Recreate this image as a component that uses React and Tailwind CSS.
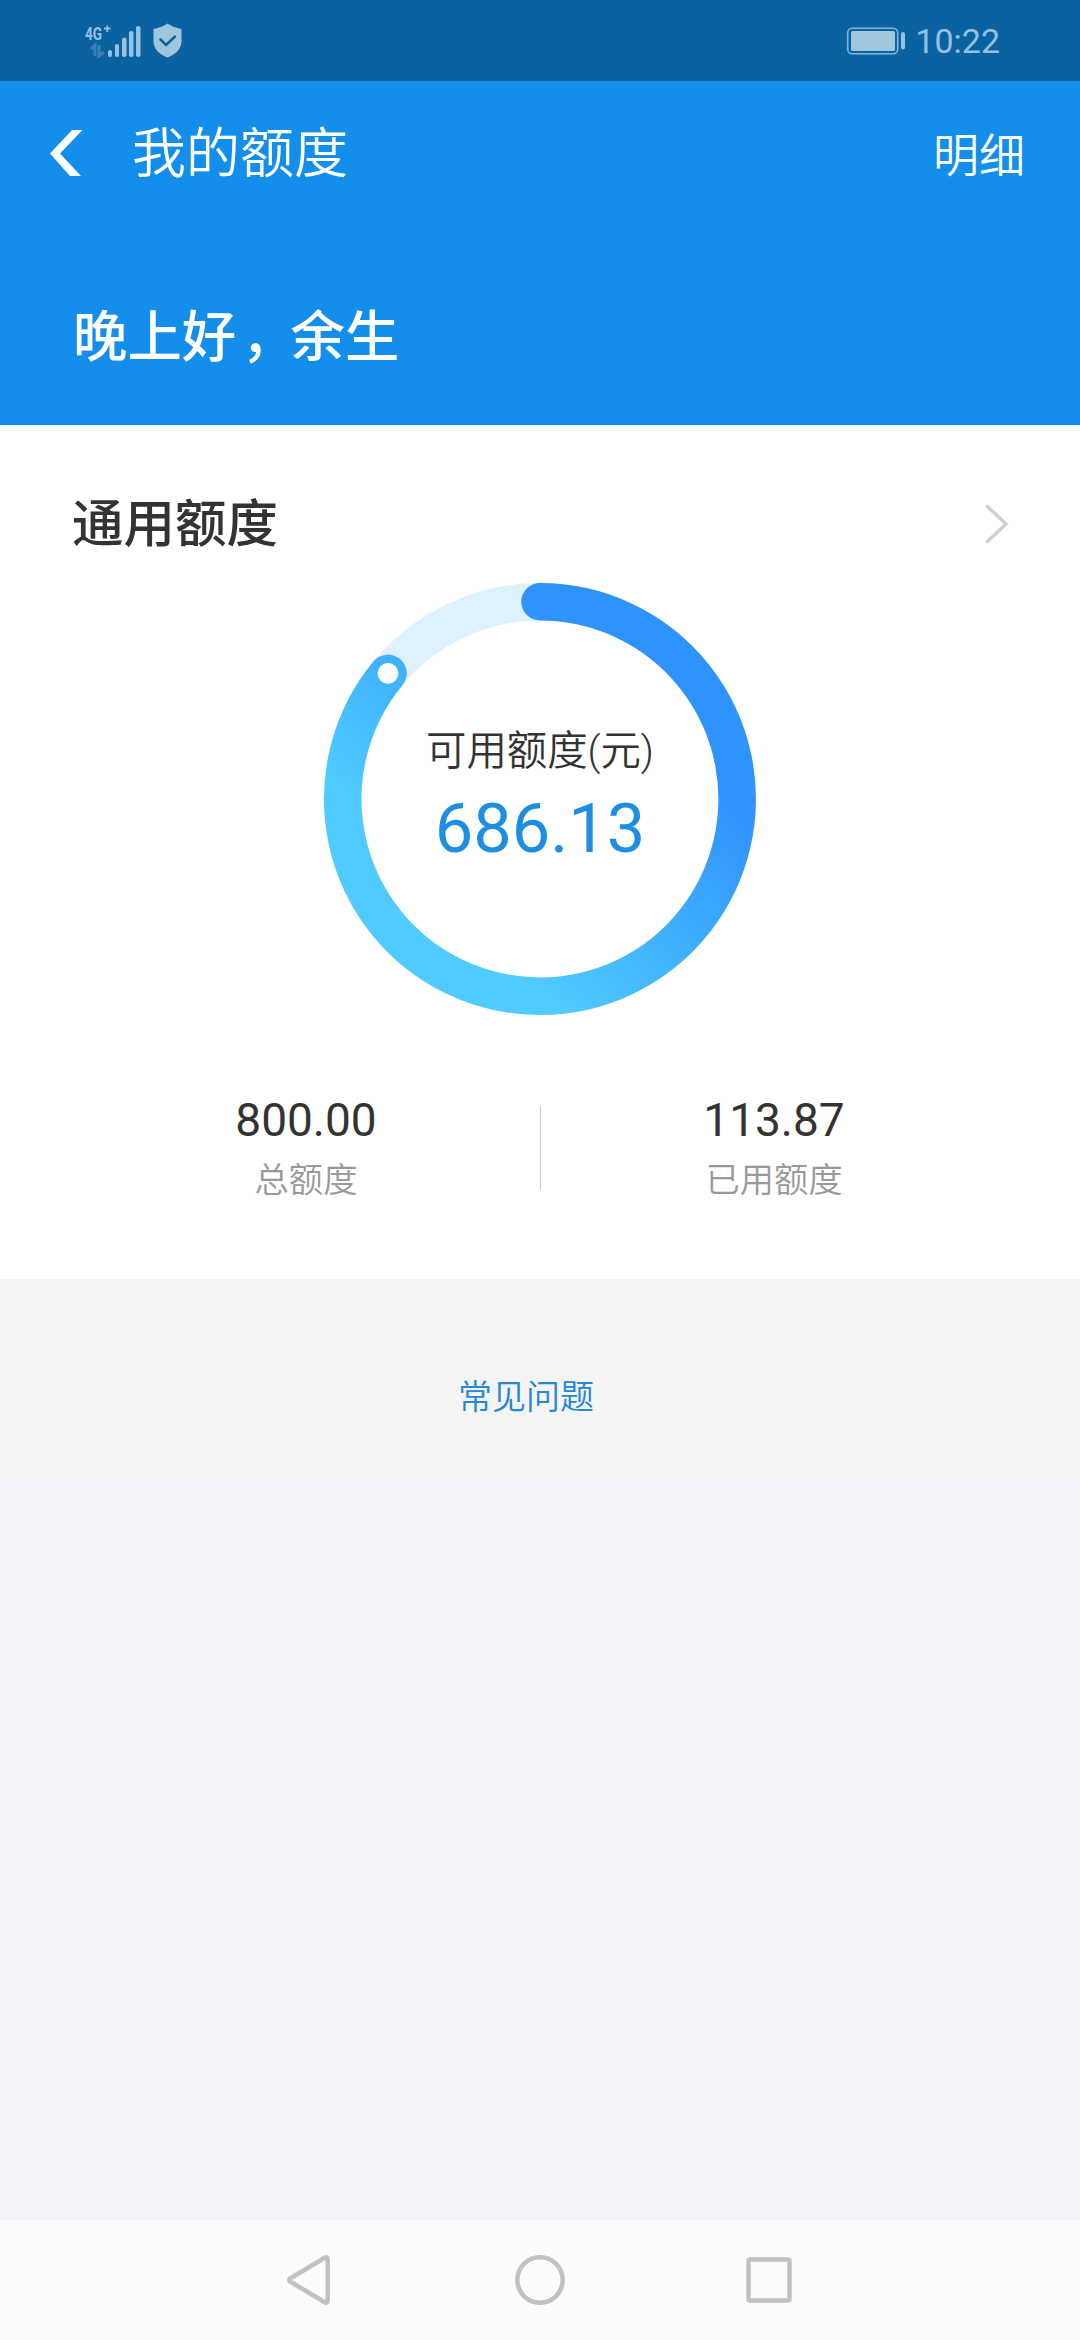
import React from "react";

const StatusBar = () => (
  <div className="h-[81px] bg-[#0b62a1] flex items-center justify-between pl-[84px] pr-[80px]">
    <div className="flex items-center gap-[11px]">
      {/* Mobile signal */}
      <svg width="58" height="36" viewBox="0 0 58 36" fill="#94c1e2">
        <text
          x="1"
          y="17"
          fontSize="19"
          fontWeight="700"
          fontFamily="Roboto, sans-serif"
          textLength="17"
          lengthAdjust="spacingAndGlyphs"
        >
          4G
        </text>
        <path d="M20 5.5h6.5M23.3 2.5v6.5" stroke="#94c1e2" strokeWidth="1.8" />
        <path
          d="M7 26l4-4v11M15 22v11l5-4"
          fill="none"
          stroke="#3a80b6"
          strokeWidth="3"
        />
        <rect x="24" y="27" width="4" height="7" rx="2" />
        <rect x="31" y="21" width="4" height="13" rx="2" />
        <rect x="38" y="14.500" width="4.500" height="19.500" rx="2" />
        <rect x="45" y="8" width="4.500" height="26" rx="2" />
        <rect x="52" y="3" width="4.500" height="31" rx="2" />
      </svg>
      {/* Shield */}
      <svg width="29" height="35" viewBox="0 0 29 35">
        <path
          d="M14.500 .5C17 2.500 23 5 28.500 6v12c0 8-6 13.500-14 16.500C6.500 31.500 .5 26 .5 18V6C6 5 12 2.500 14.500 .5z"
          fill="#a0c6de"
        />
        <path
          d="M7.500 16.500l5.500 5.500 9-8.500"
          fill="none"
          stroke="#0b62a1"
          strokeWidth="2.500"
          strokeLinecap="round"
        />
      </svg>
    </div>
    <div className="flex items-center gap-[9px]">
      <svg width="60" height="28" viewBox="0 0 60 28">
        <rect
          x="1.700"
          y="1.200"
          width="50"
          height="25.600"
          rx="4.500"
          fill="none"
          stroke="#7db3e0"
          strokeWidth="1.600"
        />
        <rect x="5" y="4" width="44" height="20" rx="1.500" fill="#a0c6de" />
        <rect x="55" y="5" width="4" height="17.500" rx="2" fill="#94c1e2" />
      </svg>
      <span className="mt-px text-[34px] leading-none text-[#94c1e2]">10:22</span>
    </div>
  </div>
);

const Header = () => (
  <header className="h-[344px] bg-[#138eea] text-white">
    <div className="h-[144px] flex items-center pl-[50px] pr-[55px]">
      <svg width="33" height="46" viewBox="0 0 33 46">
        <path d="M22 0h10.500L10 23.500 31 46H20L0 23.500z" fill="currentColor" />
      </svg>
      <h1 className="mt-[3px] ml-[49px] text-[54px] leading-none font-[350]">我的额度</h1>
      <button className="ml-auto mt-[6px] text-[46px] leading-none font-[350]">
        明细
      </button>
    </div>
    <p className="mt-[86px] ml-[73px] text-[54.400px] leading-none font-medium">
      晚上好<span className="relative left-[5px]">，</span>余生
    </p>
  </header>
);

const QuotaRing = () => (
  <div className="relative w-[434px] h-[434px] mx-auto">
    <svg width="434" height="434" viewBox="0 0 434 434" fill="none">
      <defs>
        <linearGradient
          id="ring"
          gradientUnits="userSpaceOnUse"
          x1="313"
          y1="121"
          x2="121"
          y2="313"
        >
          <stop offset="0" stopColor="#2f93fd" />
          <stop offset="1" stopColor="#4fcbff" />
        </linearGradient>
      </defs>
      <circle cx="217" cy="217" r="197.200" stroke="#def1ff" strokeWidth="37.500" />
      <path
        d="M217 19.800A197.200 197.200 0 1 1 65 91.300"
        stroke="url(#ring)"
        strokeWidth="37.500"
        strokeLinecap="round"
      />
      <circle cx="65" cy="91.300" r="10.400" fill="#fff" />
    </svg>
    <div className="absolute inset-0 flex flex-col items-center">
      <span className="mt-[150px] text-[40.400px] leading-none font-[350] text-[#333]">
        可用额度(元)
      </span>
      <span className="mt-[23px] text-[68.500px] leading-none text-[#1d8ee1]">
        686.13
      </span>
    </div>
  </div>
);

const Stat = ({ value, label }) => (
  <div className="w-[280px] flex flex-col items-center">
    <span className="text-[46px] leading-none text-[#333]">{value}</span>
    <span className="mt-[20px] text-[34.300px] leading-none font-[350] text-[#999]">
      {label}
    </span>
  </div>
);

const QuotaCard = () => (
  <section className="h-[854px] bg-white">
    <div className="h-[157px] pt-[74px] pl-[72px] pr-[71px] flex items-start justify-between">
      <h2 className="text-[51.500px] leading-none font-medium text-[#333]">
        通用额度
      </h2>
      <svg width="24" height="40" viewBox="0 0 24 40" className="mt-[5px]">
        <path
          d="M2.500 2.500L21 20 2.500 37.500"
          fill="none"
          stroke="#cfcfcf"
          strokeWidth="3.500"
          strokeLinecap="round"
        />
      </svg>
    </div>
    <QuotaRing />
    <div className="mt-[81px] flex justify-center gap-[94px]">
      <Stat value="800.00" label="总额度" />
      <div className="w-px h-[84px] mt-[9px] -mx-[0.500px] bg-[#ccc]" />
      <Stat value="113.87" label="已用额度" />
    </div>
  </section>
);

const NavBar = () => (
  <nav className="h-[120px] bg-[#fcfcfc]">
    <svg
      width="1080"
      height="120"
      viewBox="0 0 1080 120"
      fill="none"
      stroke="#c1c1c1"
      strokeWidth="4.500"
      strokeLinejoin="round"
    >
      <path d="M290.500 58.200L324.800 37.700Q327.700 36.500 327.700 39.500V80.500Q327.700 83.500 324.800 82.300L290.500 61.800Q288 60 290.500 58.200z" />
      <circle cx="540" cy="60" r="22.700" />
      <rect x="748.500" y="39.500" width="41" height="41" rx="1.500" />
    </svg>
  </nav>
);

const App = () => {
  return (
    <div className="w-[1080px] h-[2340px] flex flex-col overflow-hidden bg-[#f4f3f9] font-[Roboto,'Noto_Sans_CJK_SC',sans-serif]">
      <StatusBar />
      <Header />
      <QuotaCard />
      <div className="h-[204px] bg-[#f4f4f4] pt-[101px] pl-[458px]">
        <a className="block text-[34px] leading-none font-[350] text-[#2488d5]">
          常见问题
        </a>
      </div>
      <div className="flex-1" />
      <NavBar />
    </div>
  );
};

export default App;
